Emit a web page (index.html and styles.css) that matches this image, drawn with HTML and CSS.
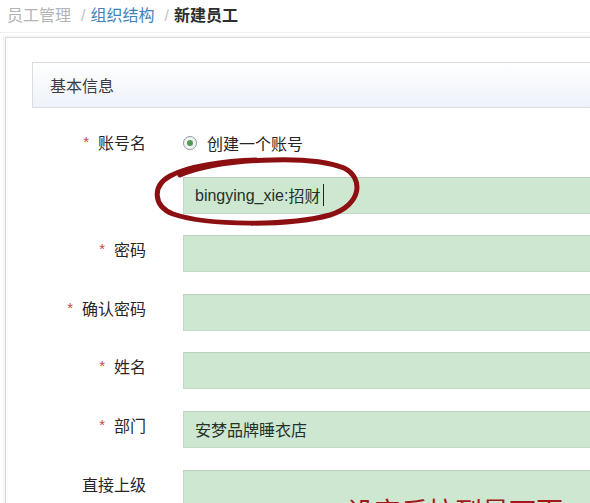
FILE: index.html
```html
<!DOCTYPE html>
<html lang="zh-CN">
<head>
<meta charset="utf-8">
<title>新建员工</title>
<link rel="stylesheet" href="styles.css">
</head>
<body>
<div class="page">
  <div class="crumbs">
    <span class="crumb-muted">员工管理</span><span class="sep">/</span><span class="crumb-link">组织结构</span><span class="sep">/</span><span class="crumb-current">新建员工</span>
  </div>
  <div class="panel">
    <div class="section-head">基本信息</div>
    <div class="form">
      <div class="label"><span class="req">*</span>账号名</div>
      <div class="radio-line"><span class="radio"><span class="radio-dot"></span></span>创建一个账号</div>

      <div class="label"></div>
      <div class="field"><span class="latin">bingying_xie:</span>招财<span class="caret"></span></div>

      <div class="label"><span class="req">*</span>密码</div>
      <div class="field"></div>

      <div class="label"><span class="req">*</span>确认密码</div>
      <div class="field"></div>

      <div class="label"><span class="req">*</span>姓名</div>
      <div class="field"></div>

      <div class="label"><span class="req">*</span>部门</div>
      <div class="field">安梦品牌睡衣店</div>

      <div class="label">直接上级</div>
      <div class="field"></div>
    </div>
  </div>

  <svg class="ink-circle" width="220" height="80" viewBox="0 0 220 80" aria-hidden="true">
    <path d="M32 22 C 70 6, 160 1, 196 15 C 216 25, 214 52, 182 62 C 142 73, 60 73, 25 61 C 5 53, 4 33, 22 23 C 40 13, 76 8, 108 7" fill="none" stroke="#8c0f12" stroke-width="5" stroke-linecap="round"/>
  </svg>
  <div class="note">设定后拉到最下面</div>
</div>
</body>
</html>
```

FILE: styles.css
```css
html, body {
  margin: 0;
  padding: 0;
  overflow: hidden;
  background: #ffffff;
}

body {
  font-family: "Noto Sans CJK SC", "Noto Sans", sans-serif;
  color: #333333;
}

.page {
  position: relative;
  width: 820px;
  height: 503px;
}

.crumbs {
  height: 33px;
  padding-left: 7px;
  font-size: 16px;
  line-height: 29px;
  box-sizing: border-box;
  border-bottom: 1px solid #f2f2f2;
  white-space: nowrap;
}

.crumb-muted {
  color: #b4b4b4;
}

.crumb-link {
  color: #3f83b8;
}

.crumb-current {
  color: #2e2e2e;
  font-weight: bold;
}

.sep {
  font-family: "Liberation Sans", sans-serif;
  color: #c4c4c4;
  margin: 0 5px 0 10px;
}

.panel {
  margin: 4px 0 0 5px;
  border: 1px solid #dadada;
  box-shadow: 0 0 0 2px #f6f6f6;
  padding: 24px 0 0 26px;
  height: 520px;
}

.section-head {
  height: 44px;
  line-height: 44px;
  padding-left: 17px;
  font-size: 16px;
  color: #3c3c3c;
  border: 1px solid #dcdcdc;
  border-right: none;
  background: linear-gradient(#ffffff, #edf2fa);
}

.form {
  margin-top: 23px;
  display: grid;
  grid-template-columns: 114px 1fr;
  column-gap: 37px;
  row-gap: 21.6px;
}

.label {
  text-align: right;
  font-size: 16px;
  line-height: 22px;
  padding-top: 3px;
  color: #262626;
  white-space: nowrap;
}

.form > .label:first-child {
  padding-top: 0;
}

.req {
  font-family: "Liberation Sans", sans-serif;
  color: #d04545;
  font-size: 15px;
  margin-right: 9px;
  position: relative;
  top: -2px;
}

.radio-line {
  display: flex;
  align-items: center;
  font-size: 16px;
  line-height: 22px;
  color: #262626;
}

.radio {
  width: 12px;
  height: 12px;
  border: 1px solid #8f9aa0;
  border-radius: 50%;
  background: #f4f6f6;
  display: flex;
  align-items: center;
  justify-content: center;
  margin-right: 10px;
}

.radio-dot {
  width: 6px;
  height: 6px;
  border-radius: 50%;
  background: #4f9a57;
}

.field {
  height: 35px;
  line-height: 35px;
  border: 1px solid #c3d8c6;
  border-top-color: #bccfc0;
  background: #cde7d0;
  padding-left: 11px;
  font-size: 16px;
  color: #26302a;
  display: flex;
  align-items: center;
  white-space: nowrap;
}

.latin {
  font-family: "Liberation Sans", sans-serif;
}

.caret {
  width: 1px;
  height: 22px;
  background: #222222;
  margin-left: 3px;
}

.ink-circle {
  position: absolute;
  left: 148px;
  top: 153px;
}

.note {
  position: absolute;
  left: 347px;
  top: 496px;
  font-size: 27px;
  line-height: 30px;
  color: #a3171b;
  white-space: nowrap;
}
```
